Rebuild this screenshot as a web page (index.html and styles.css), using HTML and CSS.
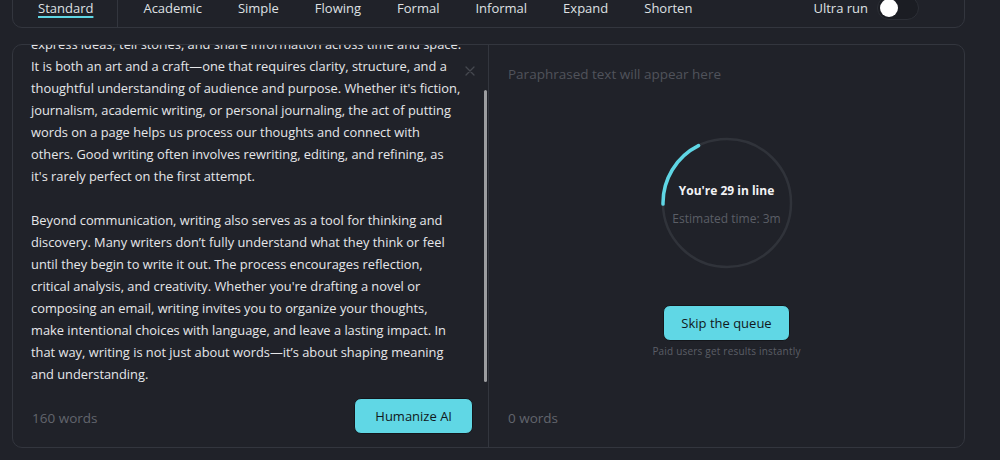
FILE: index.html
```html
<!DOCTYPE html>
<html lang="en">
<head>
<meta charset="utf-8">
<title>Paraphraser</title>
<link rel="stylesheet" href="styles.css">
</head>
<body>
<div class="page">
  <div class="topbar">
    <div class="tab-first"><span class="tab active">Standard</span></div>
    <div class="tabs">
      <span class="tab">Academic</span>
      <span class="tab">Simple</span>
      <span class="tab">Flowing</span>
      <span class="tab">Formal</span>
      <span class="tab">Informal</span>
      <span class="tab">Expand</span>
      <span class="tab">Shorten</span>
    </div>
    <div class="ultra">
      <span>Ultra run</span>
      <span class="toggle"><span class="knob"></span></span>
    </div>
  </div>

  <div class="main">
    <div class="left">
      <div class="editor">
        <div class="text">
          <p>express ideas, tell stories, and share information across time and space. It is both an art and a craft—one that requires clarity, structure, and a thoughtful understanding of audience and purpose. Whether it's fiction, journalism, academic writing, or personal journaling, the act of putting words on a page helps us process our thoughts and connect with others. Good writing often involves rewriting, editing, and refining, as it's rarely perfect on the first attempt.</p>
          <p>Beyond communication, writing also serves as a tool for thinking and discovery. Many writers don’t fully understand what they think or feel until they begin to write it out. The process encourages reflection, critical analysis, and creativity. Whether you're drafting a novel or composing an email, writing invites you to organize your thoughts, make intentional choices with language, and leave a lasting impact. In that way, writing is not just about words—it’s about shaping meaning and understanding.</p>
        </div>
        <svg class="close" width="10" height="10" viewBox="0 0 10 10"><path d="M1 1L9 9M9 1L1 9" stroke="#45484f" stroke-width="1.3" stroke-linecap="round"/></svg>
        <span class="thumb"></span>
      </div>
      <div class="footer">
        <span class="count">160 words</span>
        <button class="btn">Humanize AI</button>
      </div>
    </div>

    <div class="right">
      <div class="placeholder">Paraphrased text will appear here</div>
      <div class="queue">
        <div class="ring">
          <svg width="132" height="132" viewBox="0 0 132 132">
            <circle cx="66" cy="66" r="64" fill="none" stroke="#30333a" stroke-width="2.5"/>
            <circle cx="66" cy="66" r="64" fill="none" stroke="#5fd6e4" stroke-width="3.5" stroke-linecap="round" stroke-dasharray="72 420" transform="rotate(179 66 66)"/>
          </svg>
          <div class="ring-text">
            <div class="line-pos">You're 29 in line</div>
            <div class="eta">Estimated time: 3m</div>
          </div>
        </div>
        <button class="btn skip">Skip the queue</button>
        <div class="paid">Paid users get results instantly</div>
      </div>
      <div class="footer">
        <span class="count">0 words</span>
      </div>
    </div>
  </div>
</div>
</body>
</html>
```

FILE: styles.css
```css
* { box-sizing: border-box; }

body {
  margin: 0;
  background: #202229;
  font-family: "Open Sans", "Noto Sans", sans-serif;
  color: #e4e5e7;
  overflow: hidden;
}

.page {
  width: 965px;
  padding-left: 12px;
}

.topbar {
  margin-top: -13px;
  height: 41px;
  border: 1px solid #33363e;
  border-radius: 10px;
  display: flex;
  align-items: stretch;
  font-size: 13px;
}

.tab-first {
  display: flex;
  align-items: center;
  padding: 0 24px 0 25px;
  border-right: 1px solid #33363e;
}

.tabs {
  display: flex;
  align-items: center;
  gap: 36px;
  padding: 0 0 0 25px;
  flex: 1;
}

.tab {
  color: #dfe0e3;
  line-height: 20px;
  white-space: nowrap;
}

.tab.active {
  text-decoration: underline;
  text-decoration-color: #5fd6e4;
  text-decoration-thickness: 2px;
  text-underline-offset: 3px;
}

.ultra {
  display: flex;
  align-items: center;
  gap: 9px;
  padding: 0 45px 0 0;
  color: #dfe0e3;
}

.toggle {
  width: 42px;
  height: 24px;
  border-radius: 12px;
  background: #1b1d23;
  border: 1px solid #2c2f36;
  display: flex;
  align-items: center;
  padding-left: 2px;
}

.knob {
  width: 18px;
  height: 18px;
  border-radius: 50%;
  background: #ffffff;
}

.main {
  margin-top: 16px;
  height: 404px;
  border: 1px solid #33363e;
  border-radius: 10px;
  display: grid;
  grid-template-columns: 476px 1fr;
}

.left {
  display: flex;
  flex-direction: column;
  border-right: 1px solid #33363e;
  min-height: 0;
}

.editor {
  flex: 1;
  position: relative;
  overflow: hidden;
}

.text {
  margin-top: -12px;
  padding-left: 18px;
  width: 449px;
  font-size: 12.85px;
  line-height: 22px;
  color: #e6e7e9;
}

.text p {
  margin: 0 0 22px;
}

.close {
  position: absolute;
  top: 21px;
  left: 452px;
}

.thumb {
  position: absolute;
  top: 45px;
  right: 1px;
  width: 3px;
  height: 292px;
  border-radius: 2px;
  background: #9c9da0;
}

.footer {
  height: 63px;
  padding: 14px 15px 13px 19px;
  display: flex;
  align-items: center;
  justify-content: space-between;
  flex: none;
}

.count {
  font-size: 13.5px;
  color: #62656d;
  padding-top: 4px;
}

.btn {
  height: 36px;
  padding: 0 20px;
  border: 1px solid #14161b;
  border-radius: 7px;
  background: #60d7e5;
  color: #111820;
  font-family: "Open Sans", "Noto Sans", sans-serif;
  font-size: 13px;
}

.right {
  display: flex;
  flex-direction: column;
  min-height: 0;
}

.placeholder {
  padding: 19px 19px 0;
  line-height: 20px;
  font-size: 13.5px;
  color: #50535b;
}

.queue {
  margin-top: 53px;
  display: flex;
  flex-direction: column;
  align-items: center;
}

.ring {
  position: relative;
  width: 132px;
  height: 132px;
}

.ring svg { display: block; }

.ring-text {
  position: absolute;
  inset: 0;
  display: flex;
  flex-direction: column;
  align-items: center;
  padding-top: 44px;
}

.line-pos {
  font-size: 12px;
  font-weight: 700;
  color: #f2f3f5;
  line-height: 20px;
}

.eta {
  margin-top: 9px;
  font-size: 12px;
  color: #5b5e66;
  line-height: 18px;
}

.skip {
  margin-top: 36px;
  padding: 0 17px;
}

.paid {
  margin-top: 3px;
  font-size: 10px;
  line-height: 14px;
  color: #5b5e66;
  letter-spacing: 0.2px;
}

.right .footer {
  margin-top: auto;
}
```
